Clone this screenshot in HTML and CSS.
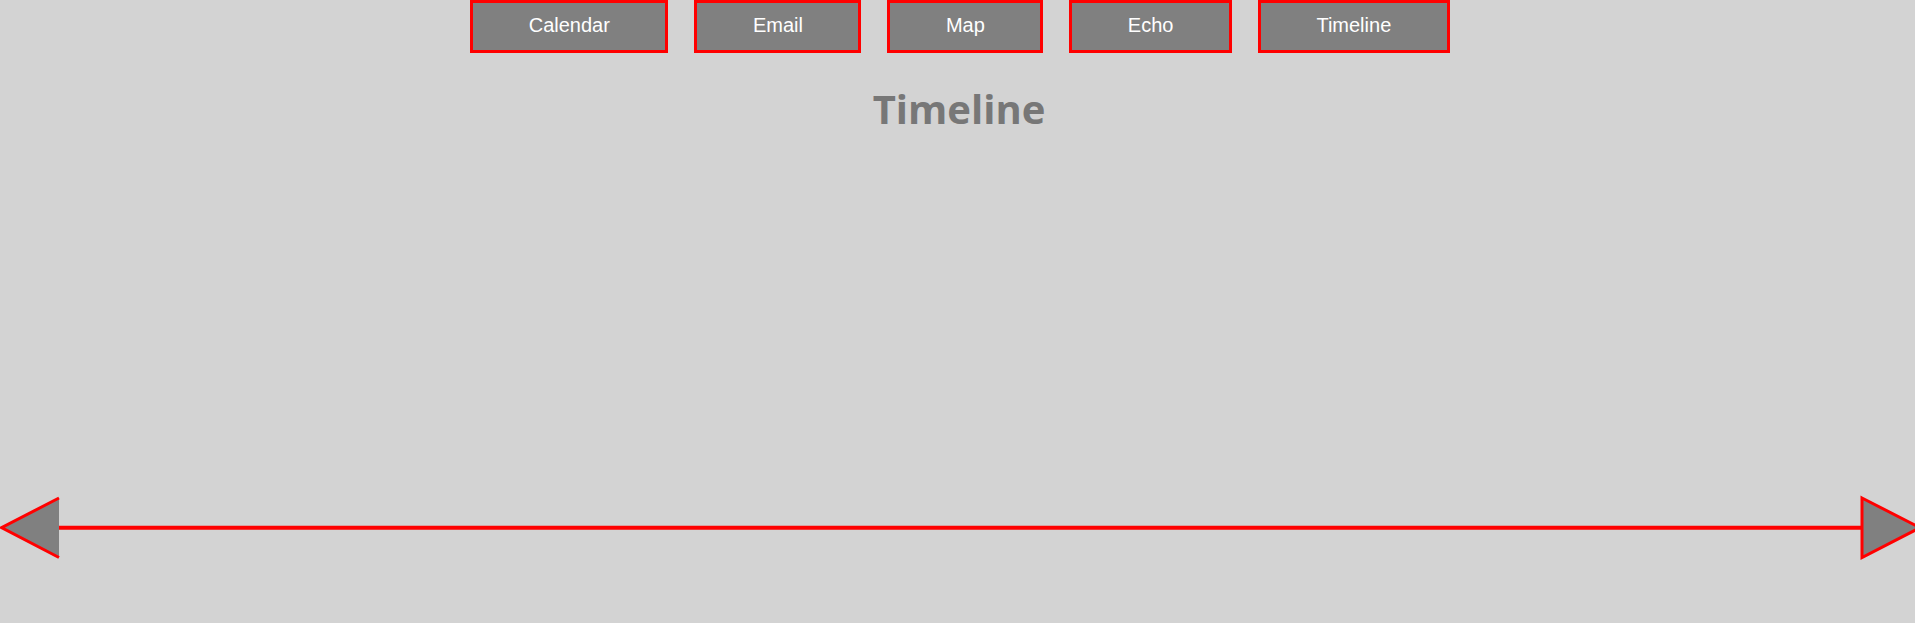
FILE: index.html
```html
<!DOCTYPE html>
<html>
<head>
<meta charset="utf-8">
<link rel="stylesheet" href="styles.css">
</head>
<body>
<nav class="nav">
  <button class="nav-btn">Calendar</button>
  <button class="nav-btn">Email</button>
  <button class="nav-btn">Map</button>
  <button class="nav-btn">Echo</button>
  <button class="nav-btn">Timeline</button>
</nav>
<h1 class="title">Timeline</h1>
<div class="timeline">
  <svg class="timeline-svg" width="1915" height="80" viewBox="0 0 1915 80">
    <line x1="58" y1="37.7" x2="1862" y2="37.7" stroke="#ff0000" stroke-width="4"/>
    <polygon points="59,8 1,37.7 59,67.5" fill="#808080"/>
    <polyline points="59,8 1.5,37.7 59,67.5" fill="none" stroke="#ff0000" stroke-width="3"/>
    <polygon points="1862,8 1920,37.7 1862,67.5" fill="#808080" stroke="#ff0000" stroke-width="3"/>
  </svg>
</div>
</body>
</html>
```

FILE: styles.css
```css
html, body {
  margin: 0;
  padding: 0;
  background: #d3d3d3;
  overflow: hidden;
}
body {
  width: 1915px;
  height: 623px;
}
.nav {
  display: flex;
  justify-content: center;
  gap: 26px;
  padding-left: 5px;
}
.nav-btn {
  box-sizing: border-box;
  height: 53px;
  margin: 0;
  padding: 0 55.5px 2px;
  border: 3px solid #ff0000;
  background: #808080;
  color: #ffffff;
  font-family: "Liberation Sans", Arial, sans-serif;
  font-size: 20px;
  line-height: 45px;
}
.title {
  margin: 29px 0 0;
  padding-left: 3px;
  text-align: center;
  font-family: "Open Sans", sans-serif;
  font-weight: 700;
  font-size: 40px;
  line-height: 53px;
  color: #777777;
}
.timeline {
  margin-top: 355px;
}
.timeline-svg {
  display: block;
}
```
